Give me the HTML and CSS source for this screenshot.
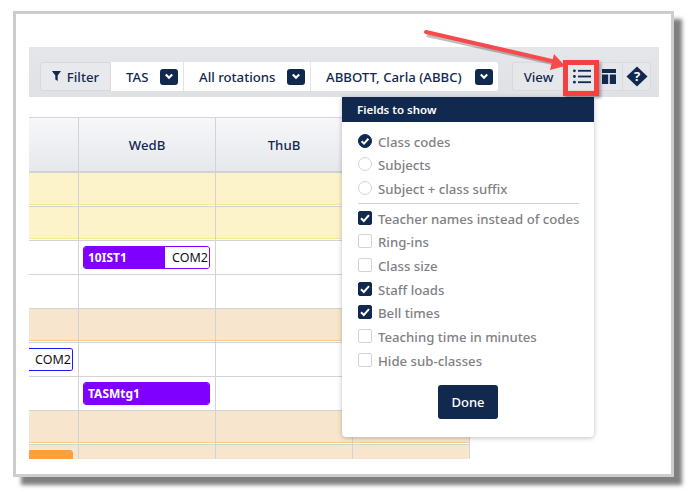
FILE: index.html
```html
<!DOCTYPE html>
<html lang="en">
<head>
<meta charset="utf-8">
<title>Fields to show</title>
<link rel="stylesheet" href="styles.css">
</head>
<body>
<div class="stage">
  <div class="frame">
    <div class="toolbar">
      <div class="filter-group">
        <div class="tb-label">
          <svg class="funnel" width="9" height="10" viewBox="0 0 9 10"><path d="M0 0H9L5.7 4.4V10L3.3 8.4V4.4Z"/></svg>
          <span>Filter</span>
        </div>
        <div class="select sel-tas"><span>TAS</span><span class="chev"><svg width="10" height="7" viewBox="0 0 10 7"><path d="M1.8 1.5L5 4.7L8.2 1.5"/></svg></span></div>
        <div class="select sel-rot"><span>All rotations</span><span class="chev"><svg width="10" height="7" viewBox="0 0 10 7"><path d="M1.8 1.5L5 4.7L8.2 1.5"/></svg></span></div>
        <div class="select sel-name"><span>ABBOTT, Carla (ABBC)</span><span class="chev"><svg width="10" height="7" viewBox="0 0 10 7"><path d="M1.8 1.5L5 4.7L8.2 1.5"/></svg></span></div>
      </div>
      <div class="view-group">
        <div class="tb-btn view-btn">View</div>
        <div class="tb-btn list-btn">
          <svg width="18" height="15" viewBox="0 0 18 15"><circle cx="1.4" cy="1.8" r="1.4"/><circle cx="1.4" cy="7.5" r="1.4"/><circle cx="1.4" cy="13.2" r="1.4"/><rect x="5" y="0.9" width="13" height="1.8"/><rect x="5" y="6.6" width="13" height="1.8"/><rect x="5" y="12.3" width="13" height="1.8"/></svg>
        </div>
        <div class="tb-btn layout-btn">
          <svg width="14" height="15" viewBox="0 0 14 15"><rect width="14" height="4"/><rect y="5.5" width="6.2" height="9.5"/><rect x="7.8" y="5.5" width="6.2" height="9.5"/></svg>
        </div>
        <div class="tb-btn help-btn">
          <svg width="22" height="21" viewBox="0 0 22 21"><path d="M11 0.5L21.5 10.5L11 20.5L0.5 10.5Z"/><text x="11" y="15" text-anchor="middle" class="qmark">?</text></svg>
        </div>
      </div>
    </div>
    <div class="grid">
      <div class="row row-head">
        <div class="cell c1"></div>
        <div class="cell c2">WedB</div>
        <div class="cell c3">ThuB</div>
        <div class="cell c4"></div>
      </div>
      <div class="row yellow"><div class="cell c1"></div><div class="cell c2"></div><div class="cell c3"></div><div class="cell c4"></div></div>
      <div class="row yellow"><div class="cell c1"></div><div class="cell c2"></div><div class="cell c3"></div><div class="cell c4"></div></div>
      <div class="row">
        <div class="cell c1"></div>
        <div class="cell c2"><div class="card purple"><span class="card-code">10IST1</span><span class="card-room">COM2</span></div></div>
        <div class="cell c3"></div><div class="cell c4"></div>
      </div>
      <div class="row"><div class="cell c1"></div><div class="cell c2"></div><div class="cell c3"></div><div class="cell c4"></div></div>
      <div class="row peach"><div class="cell c1"></div><div class="cell c2"></div><div class="cell c3"></div><div class="cell c4"></div></div>
      <div class="row">
        <div class="cell c1"><div class="card blue"><span class="card-code"></span><span class="card-room">COM2</span></div></div>
        <div class="cell c2"></div><div class="cell c3"></div><div class="cell c4"></div>
      </div>
      <div class="row">
        <div class="cell c1"></div>
        <div class="cell c2"><div class="card purple solid"><span class="card-code">TASMtg1</span></div></div>
        <div class="cell c3"></div><div class="cell c4"></div>
      </div>
      <div class="row peach"><div class="cell c1"></div><div class="cell c2"></div><div class="cell c3"></div><div class="cell c4"></div></div>
      <div class="row peach last">
        <div class="cell c1"><div class="card orange"></div></div>
        <div class="cell c2"></div><div class="cell c3"></div><div class="cell c4"></div>
      </div>
    </div>
  </div>

  <div class="popover">
    <div class="pop-head">Fields to show</div>
    <div class="pop-body">
      <div class="opt"><span class="radio on"><svg width="14" height="14" viewBox="0 0 14 14"><path d="M3.6 7.2L6 9.6L10.4 4.8"/></svg></span>Class codes</div>
      <div class="opt"><span class="radio"></span>Subjects</div>
      <div class="opt"><span class="radio"></span>Subject + class suffix</div>
      <div class="sep"></div>
      <div class="opt"><span class="check on"><svg width="14" height="14" viewBox="0 0 14 14"><path d="M3 7.2L5.8 10L11 4.2"/></svg></span>Teacher names instead of codes</div>
      <div class="opt"><span class="check"></span>Ring-ins</div>
      <div class="opt"><span class="check"></span>Class size</div>
      <div class="opt"><span class="check on"><svg width="14" height="14" viewBox="0 0 14 14"><path d="M3 7.2L5.8 10L11 4.2"/></svg></span>Staff loads</div>
      <div class="opt"><span class="check on"><svg width="14" height="14" viewBox="0 0 14 14"><path d="M3 7.2L5.8 10L11 4.2"/></svg></span>Bell times</div>
      <div class="opt"><span class="check"></span>Teaching time in minutes</div>
      <div class="opt"><span class="check"></span>Hide sub-classes</div>
      <div class="done-wrap"><button class="done">Done</button></div>
    </div>
  </div>

  <div class="redbox"></div>
  <svg class="arrow" width="690" height="493" viewBox="0 0 690 493">
    <path class="arrow-shadow" d="M426 33L556 62"/>
    <path class="arrow-line" d="M426 32L556 62"/>
    <path class="arrow-head" d="M565 66L554 54L550 70Z"/>
  </svg>
</div>
</body>
</html>
```
FILE: styles.css
```css
* { box-sizing: border-box; }
html, body { margin: 0; padding: 0; background: #fff; }
body { font-family: "Noto Sans", "Open Sans", sans-serif; color: #12294f; }

.stage { position: relative; width: 690px; height: 493px; overflow: hidden; padding: 11px 0 0 13px; }

.frame {
  width: 661px;
  height: 466px;
  border: 3px solid #cdcdcd;
  background: #fff;
  box-shadow: 8px 8px 4px #7f7f7f;
  padding: 33px 12px 0 13px;
}

/* toolbar */
.toolbar {
  height: 50px;
  background: linear-gradient(#e5e6ea, #dfe1e5);
  padding: 15px 8px 0 11px;
  display: flex;
  justify-content: space-between;
  align-items: flex-start;
}
.filter-group { display: flex; height: 29px; font-size: 13.2px; font-weight: 500; }
.tb-label {
  width: 71px;
  display: flex;
  align-items: center;
  justify-content: center;
  gap: 6px;
  padding-top: 1px;
  background: #e8e9ec;
  border: 1px solid #d7d8dc;
  border-radius: 3px 0 0 3px;
}
.funnel { fill: #12294f; margin-top: -2px; }
.select {
  display: flex;
  align-items: center;
  justify-content: space-between;
  background: #fff;
  padding: 1px 5px 0 15px;
  margin-right: 1px;
}
.sel-tas { width: 72px; }
.sel-rot { width: 126px; }
.sel-name { width: 187px; margin-right: 0; border-radius: 0 3px 3px 0; }
.chev {
  width: 18px;
  height: 16px;
  margin-top: -1px;
  background: #12294f;
  border-radius: 3px;
  display: flex;
  align-items: center;
  justify-content: center;
}
.chev path { fill: none; stroke: #fff; stroke-width: 2.2; }

.view-group { display: flex; height: 29px; }
.tb-btn {
  display: flex;
  align-items: center;
  justify-content: center;
  background: #e6e7eb;
  border: 1px solid #d9dade;
  border-left-width: 0;
  font-size: 13.2px;
  font-weight: 500;
}
.tb-btn svg { fill: #12294f; }
.view-btn { width: 53px; padding-top: 1px; border-left-width: 1px; border-radius: 3px 0 0 3px; }
.list-btn { width: 35px; padding-right: 2px; border-right: 0; }
.layout-btn { width: 23px; justify-content: flex-start; padding-left: 2px; }
.help-btn { width: 28px; border-radius: 0 3px 3px 0; }
.qmark { fill: #fff; font-size: 13px; font-weight: 700; font-family: "Noto Sans", sans-serif; }

/* timetable */
.grid { width: 441px; height: 342px; margin-top: 20px; overflow: hidden; border-top: 1px solid #d5d6da; border-right: 1px solid #d5d6da; }
.row { display: flex; height: 34px; border-bottom: 1px solid #d2d3d7; }
.row-head {
  height: 55px;
  border-bottom: 2px solid #d0d1d5;
  background: linear-gradient(#f7f7f9, #e6e8ec);
  font-size: 13.2px;
  font-weight: 500;
  text-align: center;
}
.row-head .cell { display: flex; align-items: center; justify-content: center; }
.cell { border-right: 1px solid #d2d3d7; padding-top: 5px; position: relative; }
.row-head .cell { padding-top: 0; }
.c1 { width: 50px; }
.c2, .c3 { width: 137px; }
.c4 { flex: 1; border-right: 0; }

.yellow { background: #fdf3cb; box-shadow: inset 0 -1px 0 #fff, inset 0 -2px 0 #fde68d; }
.peach { background: #f7e6cd; box-shadow: inset 0 -1px 0 #fff, inset 0 -2px 0 #fbcb85; }
.peach.last { box-shadow: none; }

.card {
  height: 23px;
  margin: 0 5px 0 4px;
  border-radius: 3px;
  display: flex;
  font-size: 12.5px;
  overflow: hidden;
  border: 1px solid;
}
.card-code {
  flex: 1;
  color: #fff;
  font-weight: 700;
  font-size: 12px;
  padding-left: 4px;
  line-height: 21px;
}
.card-room { width: 44px; background: #fff; color: #111; line-height: 21px; text-align: right; padding-right: 1px; }
.purple { border-color: #8000ff; }
.purple .card-code { background: #8000ff; }
.solid .card-code { background: #8000ff; }
.blue { border-color: #1a1aff; border-left: 0; margin-left: 0; border-radius: 0 3px 3px 0; justify-content: flex-end; }
.blue .card-code { display: none; }
.orange { background: #ff9f40; border-color: #ff9f40; margin-left: 0; border-radius: 0 3px 0 0; height: 20px; }

/* popover */
.popover {
  position: absolute;
  left: 342px;
  top: 97px;
  width: 252px;
  height: 340px;
  background: #fff;
  border-radius: 0 0 4px 4px;
  box-shadow: 0 1px 5px rgba(0, 0, 0, 0.25);
}
.pop-head {
  height: 25px;
  background: #12294f;
  color: #fff;
  font-size: 11.5px;
  font-weight: 600;
  line-height: 26px;
  padding-left: 15px;
}
.pop-body { padding: 8px 15px 0 16px; }
.opt {
  height: 23.67px;
  display: flex;
  align-items: center;
  gap: 6px;
  font-size: 13.2px;
  font-weight: 500;
  color: #7f8185;
  white-space: nowrap;
}
.radio, .check {
  flex: none;
  width: 14px;
  height: 14px;
  border: 1px solid #d2d3d6;
  background: #fff;
  margin-top: -2px;
}
.radio { border-radius: 50%; }
.check { border-radius: 2px; }
.radio.on, .check.on { background: #12294f; border-color: #12294f; }
.radio svg, .check svg { display: block; margin: -1px; }
.radio path, .check path { fill: none; stroke: #fff; stroke-width: 2; }
.sep { height: 1px; background: #d0d1d4; margin: 2px 0 3px; }
.done-wrap { display: flex; justify-content: center; padding: 12px 0 0; margin-left: -1px; }
.done {
  width: 60px;
  height: 34px;
  background: #12294f;
  color: #fff;
  border: 0;
  border-radius: 3px;
  font-family: inherit;
  font-size: 13px;
  font-weight: 500;
}

/* annotation */
.redbox {
  position: absolute;
  left: 563px;
  top: 60px;
  width: 36px;
  height: 36px;
  border: 5px solid #f6403f;
  box-shadow: 2px 2px 3px rgba(0, 0, 0, 0.35);
}
.arrow { position: absolute; left: 0; top: 0; pointer-events: none; }
.arrow-shadow { fill: none; stroke: rgba(0, 0, 0, 0.25); stroke-width: 4; transform: translate(1px, 2px); }
.arrow-line { fill: none; stroke: #f8494b; stroke-width: 4; stroke-linecap: round; }
.arrow-head { fill: #f8494b; }
```
